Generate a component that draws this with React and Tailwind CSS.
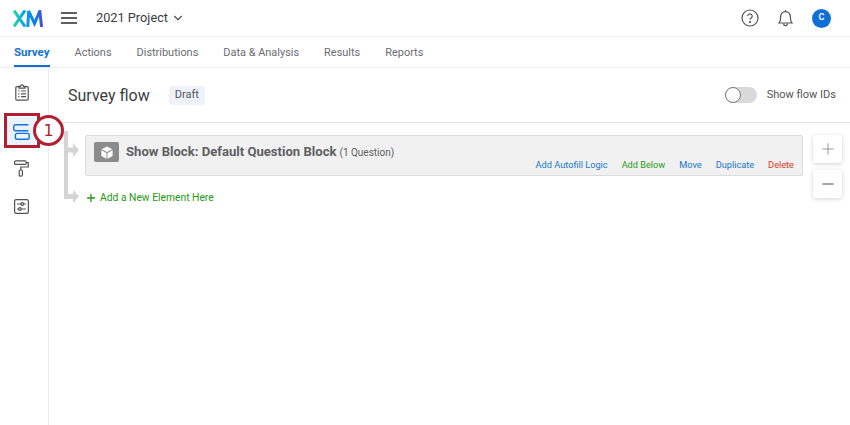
import { ChevronDown, Plus, Minus } from 'lucide-react'

const tabs = ['Actions', 'Distributions', 'Data & Analysis', 'Results', 'Reports']

function Logo() {
  return (
    <svg width="30" height="17" viewBox="0 0 30 17" fill="none">
      <defs>
        <linearGradient id="xm" x1="0" y1="0" x2="30" y2="0" gradientUnits="userSpaceOnUse">
          <stop offset="0" stopColor="#21dbaa" />
          <stop offset="0.4" stopColor="#07a0e8" />
          <stop offset="0.75" stopColor="#0b7fe0" />
          <stop offset="1" stopColor="#5a45c8" />
        </linearGradient>
      </defs>
      <path d="M1 0.5 L12 16.5 M12 0.5 L1 16.5 M14.8 17 L15.6 1 L21.5 13.5 L26.8 1 L28.6 17" stroke="url(#xm)" strokeWidth="3" />
    </svg>
  )
}

function ClipboardIcon() {
  return (
    <svg width="14" height="17" viewBox="0 0 14 17" fill="none" stroke="#525256" strokeWidth="1.2">
      <path d="M4 2.6 H2 a1.2 1.2 0 0 0 -1.2 1.2 V15 A1.2 1.2 0 0 0 2 16.2 H12 a1.2 1.2 0 0 0 1.2 -1.2 V3.8 A1.2 1.2 0 0 0 12 2.6 H10" />
      <path d="M4 4.2 V2.4 H5.5 a1.5 1.5 0 0 1 3 0 H10 V4.2 Z" />
      <path d="M3.2 7 H4.4 M6 7 H11 M3.2 9.8 H4.4 M6 9.8 H11 M3.2 12.6 H4.4 M6 12.6 H11" />
    </svg>
  )
}

function FlowIcon() {
  return (
    <svg width="17" height="16" viewBox="0 0 17 16" fill="none" stroke="#1272d6" strokeWidth="1.4">
      <path d="M15.4 6.8 H2.6 A1.8 1.8 0 0 1 0.8 5 V2.6 A1.8 1.8 0 0 1 2.6 0.8 H15.4" />
      <rect x="2.4" y="9.4" width="13.8" height="5.8" rx="1.8" />
    </svg>
  )
}

function RollerIcon() {
  return (
    <svg width="15" height="17" viewBox="0 0 15 17" fill="none" stroke="#525256" strokeWidth="1.2">
      <rect x="0.6" y="0.8" width="11.6" height="3.6" rx="1.1" />
      <path d="M12.2 2.6 H14.2 V7 H6.8 V10" />
      <rect x="5.2" y="10" width="3.2" height="6.2" rx="1.2" />
    </svg>
  )
}

function SlidersIcon() {
  return (
    <svg width="15" height="15" viewBox="0 0 15 15" fill="none" stroke="#525256" strokeWidth="1.2">
      <rect x="0.6" y="0.6" width="13.8" height="13.8" rx="1.6" />
      <path d="M3 5 H7 M9.6 5 H12 M3 10 H4.6 M7.2 10 H12" />
      <circle cx="8.3" cy="5" r="1.3" />
      <circle cx="5.9" cy="10" r="1.3" />
    </svg>
  )
}

function HelpIcon() {
  return (
    <svg width="18" height="18" viewBox="0 0 18 18" fill="none" stroke="#525256" strokeWidth="1.2">
      <circle cx="9" cy="9" r="8" />
      <path d="M6.8 7.1 a2.2 2.2 0 1 1 3.4 1.9 C9.4 9.5 9 9.9 9 10.8" />
      <circle cx="9" cy="13" r="0.5" fill="#525256" />
    </svg>
  )
}

function BellIcon() {
  return (
    <svg width="15" height="18" viewBox="0 0 15 18" fill="none" stroke="#525256" strokeWidth="1.2">
      <path d="M1 14 C2.4 12.6 2.6 11 2.6 8.6 C2.6 5 4.6 2.6 7.5 2.6 C10.4 2.6 12.4 5 12.4 8.6 C12.4 11 12.6 12.6 14 14 Z" />
      <path d="M7.5 2.6 V1 M5.6 14.4 a1.9 2.2 0 0 0 3.8 0" />
    </svg>
  )
}

function CubeIcon() {
  return (
    <svg width="12" height="13" viewBox="0 0 12 13">
      <path d="M6 0.4 L11.4 3.3 L6 6.1 L0.6 3.3 Z" fill="#ffffff" />
      <path d="M0.4 4.3 L5.5 7 V12.8 L0.4 10 Z" fill="#ffffff" />
      <path d="M11.6 4.3 L6.5 7 V12.8 L11.6 10 Z" fill="#ffffff" />
    </svg>
  )
}

// grey connector running from the top of the flow down to both rows
function FlowLines() {
  return (
    <svg className="absolute left-[64px] top-[131px]" width="16" height="74" viewBox="0 0 16 74">
      <path d="M0 0 H4 V16.5 H9 V12 L15 19 L9 26 V21.5 H4 V63 H9 V59 L15 65.5 L9 72 V68 H0 Z" fill="#d4d4d4" />
    </svg>
  )
}

function App() {
  return (
    <div className="relative h-[425px] w-[850px] overflow-hidden bg-white font-['Roboto','Noto_Sans',sans-serif] text-[#525256]">
      {/* top bar */}
      <div className="flex h-[37px] items-center border-b border-[#ececec] pl-[13px] pr-[19px]">
        <Logo />
        <div className="ml-[18px] flex w-[16px] flex-col gap-[3px]">
          <span className="h-[2px] bg-[#5f5f63]" />
          <span className="h-[2px] bg-[#5f5f63]" />
          <span className="h-[2px] bg-[#5f5f63]" />
        </div>
        <span className="ml-[19px] text-[12.75px] text-[#3c3c40]">2021 Project</span>
        <ChevronDown className="ml-[3px] text-[#525256]" size={14} />
        <div className="ml-auto flex items-center">
          <HelpIcon />
          <span className="ml-[19px] flex"><BellIcon /></span>
          <span className="ml-[19px] flex h-[19px] w-[19px] items-center justify-center rounded-full bg-[#0f6fd6] text-[9px] font-semibold text-white">
            C
          </span>
        </div>
      </div>

      {/* tabs */}
      <div className="flex h-[31px] items-center gap-[25px] border-b border-[#ececec] pl-[14px] text-[10.95px] text-[#6b6b70]">
        <span className="flex h-full items-center border-b-2 border-[#1272d6] pt-[3px] text-[11.5px] font-bold text-[#1272d6]">Survey</span>
        {tabs.map((t) => (
          <span key={t} className="pt-[2px]">{t}</span>
        ))}
      </div>

      <div className="flex h-[357px]">
        {/* sidebar */}
        <div className="flex w-[49px] shrink-0 flex-col items-center border-r border-[#ececec] pt-[16px]">
          <span className="flex h-[17px] items-center pr-[5px]"><ClipboardIcon /></span>
          <span className="mt-[16px] mr-[5px] flex h-[29px] w-[29px] items-center justify-center rounded-[3px] bg-[#eaf2fc]">
            <FlowIcon />
          </span>
          <span className="mt-[14px] flex h-[17px] items-center pr-[5px]"><RollerIcon /></span>
          <span className="mt-[22px] flex h-[15px] items-center pr-[5px]"><SlidersIcon /></span>
        </div>

        {/* main */}
        <div className="min-w-0 flex-1">
          <div className="flex h-[55px] items-center border-b border-[#e4e4e4] pl-[19px] pr-[14px]">
            <h1 className="pt-[1px] text-[16px] leading-none text-[#3c3c40]">Survey flow</h1>
            <span className="ml-[19px] flex h-[19px] items-center rounded-[3px] bg-[#eef3fb] px-[6px] pt-[1px] text-[11px] text-[#525256]">
              Draft
            </span>
            <div className="ml-auto flex items-center">
              <span className="relative h-[16px] w-[32px] rounded-full bg-[#d9d9d9]">
                <span className="absolute left-0 top-0 h-[16px] w-[16px] rounded-full border border-[#77777c] bg-white" />
              </span>
              <span className="ml-[10px] pt-[1px] text-[11px] text-[#525256]">Show flow IDs</span>
            </div>
          </div>

          <div className="flex items-start pl-[36px] pt-[12px] pr-[7px]">
            <div className="w-[718px]">
              <div className="h-[41px] rounded-[2px] border border-[#dcdcdc] bg-[#f1f1f1]">
                <div className="flex items-center pl-[8px] pt-[6px]">
                  <span className="flex h-[20px] w-[25px] items-center justify-center rounded-[2px] bg-[#8c8c8c]">
                    <CubeIcon />
                  </span>
                  <span className="ml-[7px] text-[13.1px] font-bold text-[#5f5f63]">Show Block: Default Question Block</span>
                  <span className="ml-[3px] text-[10px] text-[#5f5f63]">(1 Question)</span>
                </div>
                <div className="-mt-[4px] flex justify-end gap-[14px] pr-[8px] text-[9.2px] leading-[13px]">
                  <span className="text-[#1577c9]">Add Autofill Logic</span>
                  <span className="text-[#2a9a18]">Add Below</span>
                  <span className="text-[#1577c9]">Move</span>
                  <span className="text-[#1577c9]">Duplicate</span>
                  <span className="text-[#e0371a]">Delete</span>
                </div>
              </div>
              <div className="mt-[15px] flex items-center text-[#1f9a12]">
                <Plus size={12} strokeWidth={2.6} color="#1f9a12" />
                <span className="ml-[3px] text-[10.3px] leading-[14px]">Add a New Element Here</span>
              </div>
            </div>
            <div className="ml-[10px] flex flex-col gap-[7px]">
              <span className="flex h-[28px] w-[29px] items-center justify-center rounded-[3px] bg-white shadow-[0_1px_4px_rgba(0,0,0,0.18)]">
                <Plus size={18} strokeWidth={1} className="text-[#77777c]" />
              </span>
              <span className="flex h-[28px] w-[29px] items-center justify-center rounded-[3px] bg-white shadow-[0_1px_4px_rgba(0,0,0,0.18)]">
                <Minus size={18} strokeWidth={1.5} className="text-[#525256]" />
              </span>
            </div>
          </div>
        </div>
      </div>

      <FlowLines />

      {/* callout drawn over the screenshot */}
      <div className="absolute left-[4px] top-[113px] h-[35px] w-[36px] border-[3px] border-[#b21f30]" />
      <div className="absolute left-[33px] top-[115px] flex h-[31px] w-[31px] items-center justify-center rounded-full border-[3px] border-[#b21f30] bg-white font-['DejaVu_Sans',sans-serif] text-[16px] text-[#b21f30]">
        1
      </div>
    </div>
  )
}

export default App
